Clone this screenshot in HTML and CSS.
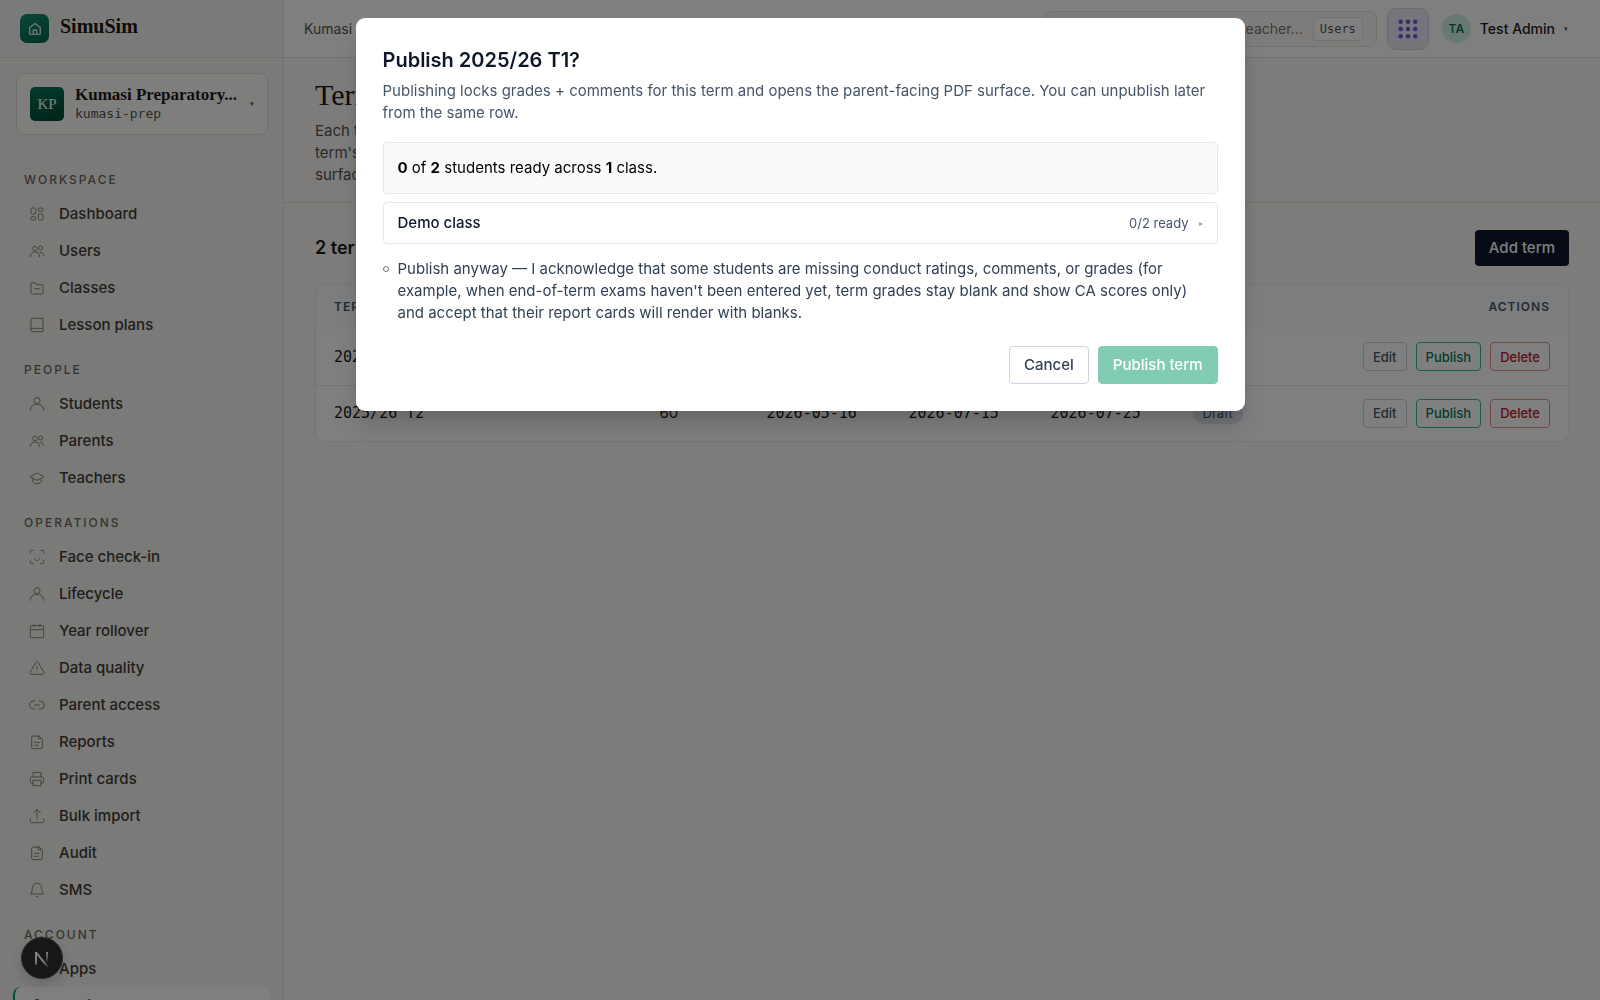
FILE: index.html
```html
<!doctype html>
<html lang="en">
<head>
	<meta charset="utf-8">
	<title>Terms - SimuSim</title>
	<link rel="stylesheet" href="styles.css">
</head>

<body>
	<!-- icons shared by the sidebar -->
	<svg class="sprite" aria-hidden="true">
		<symbol id="grid" viewBox="0 0 24 24"><rect x="3" y="3" width="7" height="9" rx="1.5"/><rect x="14" y="3" width="7" height="5" rx="1.5"/><rect x="14" y="12" width="7" height="9" rx="1.5"/><rect x="3" y="16" width="7" height="5" rx="1.5"/></symbol>
		<symbol id="users" viewBox="0 0 24 24"><circle cx="9" cy="8.5" r="3.5"/><path d="M2 21c0-5 3-7.500 7-7.500s7 2.500 7 7.500"/><circle cx="17.5" cy="7.5" r="3"/><path d="M16 14c3-.5 5.500 1.500 6 5"/></symbol>
		<symbol id="folder" viewBox="0 0 24 24"><path d="M3 6a2 2 0 0 1 2-2h4l2 3h8a2 2 0 0 1 2 2v10a2 2 0 0 1-2 2H5a2 2 0 0 1-2-2z"/><path d="M8 13h8"/></symbol>
		<symbol id="book" viewBox="0 0 24 24"><path d="M3 19.500V4a2 2 0 0 1 2-2h16v20H5.500A2.500 2.500 0 0 1 3 19.500 2.500 2.500 0 0 1 5.500 17H21"/></symbol>
		<symbol id="user" viewBox="0 0 24 24"><circle cx="12" cy="7" r="4.500"/><path d="M2 22c0-6 4-9.500 10-9.500S22 16 22 22"/></symbol>
		<symbol id="cap" viewBox="0 0 24 24"><path d="M1.500 10L12 4.500 22.500 10 12 15.500z"/><path d="M5.500 12.500V17c1.500 2.500 4 3.500 6.500 3.500s5-1 6.500-3.500v-4.500"/></symbol>
		<symbol id="face" viewBox="0 0 24 24"><path d="M2 7V4a2 2 0 0 1 2-2h3M17 2h3a2 2 0 0 1 2 2v3M22 17v3a2 2 0 0 1-2 2h-3M7 22H4a2 2 0 0 1-2-2v-3M8 14c1 2.500 2.500 3.500 4 3.500s3-1 4-3.500M8.500 9v.5M15.500 9v.5"/></symbol>
		<symbol id="calendar" viewBox="0 0 24 24"><rect x="2" y="4" width="20" height="18" rx="2"/><path d="M2 10h20M7.500 1.500V6M16.500 1.500V6"/></symbol>
		<symbol id="alert" viewBox="0 0 24 24"><path d="M10.300 3.500L1.600 18.500A2 2 0 0 0 3.300 21.500h17.400a2 2 0 0 0 1.700-3L13.700 3.500a2 2 0 0 0-3.400 0zM12 8.500v6M12 17.500v.5"/></symbol>
		<symbol id="link" viewBox="0 0 24 24"><path d="M9.500 6H7a6 6 0 0 0 0 12h2.500M14.500 6H17a6 6 0 0 1 0 12h-2.500M8 12h8"/></symbol>
		<symbol id="doc" viewBox="0 0 24 24"><path d="M14 3H6a2 2 0 0 0-2 2v15a2 2 0 0 0 2 2h12a2 2 0 0 0 2-2V8l-6-6v5h6M8 12.500h8M8 17h6"/></symbol>
		<symbol id="printer" viewBox="0 0 24 24"><path d="M6 9V2h12v7M6 18H4a2 2 0 0 1-2-2v-5a2 2 0 0 1 2-2h16a2 2 0 0 1 2 2v5a2 2 0 0 1-2 2h-2"/><rect x="6" y="14" width="12" height="8"/></symbol>
		<symbol id="upload" viewBox="0 0 24 24"><path d="M2 16v4a2 2 0 0 0 2 2h16a2 2 0 0 0 2-2v-4M12 17V2M6.500 7.500L12 2l5.500 5.500"/></symbol>
		<symbol id="bell" viewBox="0 0 24 24"><path d="M5 9a7 7 0 0 1 14 0c0 7 3 9 3 9H2s3-2 3-9M10 22h4"/></symbol>
		<symbol id="cog" viewBox="0 0 24 24"><circle cx="12" cy="12" r="3"/><path d="M10 2h4l.7 3 2 1.100 3-.9 2 3.500-2.300 2.100v2.400l2.300 2.100-2 3.500-3-.9-2 1.100-.7 3h-4l-.7-3-2-1.100-3 .9-2-3.500 2.300-2.100v-2.400L2.300 8.700l2-3.500 3 .9 2-1.100z"/></symbol>
	</svg>

	<div class="app">
		<aside class="sidebar">
			<a class="brand" href="#">
				<span class="brand-mark"><svg viewBox="0 0 24 24"><path d="M3 21V9.500L12 2.500l9 7V21zM9 21v-7h6v7"/></svg></span>
				<span class="brand-name">SimuSim</span>
			</a>
			<button class="school" type="button">
				<span class="school-mark">KP</span>
				<span class="school-text">
					<span class="school-name">Kumasi Preparatory...</span>
					<span class="school-slug">kumasi-prep</span>
				</span>
				<span class="caret">▾</span>
			</button>
			<nav class="nav">
				<h2>Workspace</h2>
				<a href="#"><svg><use href="#grid"/></svg>Dashboard</a>
				<a href="#"><svg><use href="#users"/></svg>Users</a>
				<a href="#"><svg><use href="#folder"/></svg>Classes</a>
				<a href="#"><svg><use href="#book"/></svg>Lesson plans</a>
				<h2>People</h2>
				<a href="#"><svg><use href="#user"/></svg>Students</a>
				<a href="#"><svg><use href="#users"/></svg>Parents</a>
				<a href="#"><svg><use href="#cap"/></svg>Teachers</a>
				<h2>Operations</h2>
				<a href="#"><svg><use href="#face"/></svg>Face check-in</a>
				<a href="#"><svg><use href="#user"/></svg>Lifecycle</a>
				<a href="#"><svg><use href="#calendar"/></svg>Year rollover</a>
				<a href="#"><svg><use href="#alert"/></svg>Data quality</a>
				<a href="#"><svg><use href="#link"/></svg>Parent access</a>
				<a href="#"><svg><use href="#doc"/></svg>Reports</a>
				<a href="#"><svg><use href="#printer"/></svg>Print cards</a>
				<a href="#"><svg><use href="#upload"/></svg>Bulk import</a>
				<a href="#"><svg><use href="#doc"/></svg>Audit</a>
				<a href="#"><svg><use href="#bell"/></svg>SMS</a>
				<h2>Account</h2>
				<a href="#"><svg><use href="#grid"/></svg>Apps</a>
				<a class="active" href="#"><svg><use href="#cog"/></svg>Settings</a>
			</nav>
		</aside>

		<div class="page">
			<header class="topbar">
				<span class="crumb">Kumasi Prep</span>
				<label class="search">
					<input type="text" aria-label="Search" placeholder="Find student or teacher...">
					<kbd>Users</kbd>
				</label>
				<button class="apps" type="button" aria-label="Apps">
					<svg viewBox="0 0 22 22"><circle cx="3" cy="3" r="2.500"/><circle cx="11" cy="3" r="2.500"/><circle cx="19" cy="3" r="2.500"/><circle cx="3" cy="11" r="2.500"/><circle cx="11" cy="11" r="2.500"/><circle cx="19" cy="11" r="2.500"/><circle cx="3" cy="19" r="2.500"/><circle cx="11" cy="19" r="2.500"/><circle cx="19" cy="19" r="2.500"/></svg>
				</button>
				<button class="account" type="button">
					<span class="avatar">TA</span>
					Test Admin
					<span class="caret">▾</span>
				</button>
			</header>

			<div class="page-head">
				<h1>Terms</h1>
				<p>Each term belongs to an academic year. Publishing locks a<br>term's grades and comments and opens the parent-facing<br>surface for report cards.</p>
			</div>

			<main class="content">
				<div class="toolbar">
					<h2>2 terms</h2>
					<button class="btn-dark" type="button">Add term</button>
				</div>
				<div class="card">
					<table>
						<thead>
							<tr><th class="c-term">Term</th><th class="c-days">Days</th><th class="c-date">Starts</th><th class="c-date">Ends</th><th class="c-date">Reopens</th><th>Status</th><th class="c-actions">Actions</th></tr>
						</thead>
						<tbody>
							<tr>
								<td class="mono">2025/26 T1</td><td>60</td><td class="mono">2026-01-08</td><td class="mono">2026-04-02</td><td class="mono">2026-05-05</td><td><span class="pill">Draft</span></td>
								<td><div class="actions"><button class="btn-sm" type="button">Edit</button><button class="btn-sm green" type="button">Publish</button><button class="btn-sm red" type="button">Delete</button></div></td>
							</tr>
							<tr>
								<td class="mono">2025/26 T2</td><td>60</td><td class="mono">2026-05-16</td><td class="mono">2026-07-15</td><td class="mono">2026-07-25</td><td><span class="pill">Draft</span></td>
								<td><div class="actions"><button class="btn-sm" type="button">Edit</button><button class="btn-sm green" type="button">Publish</button><button class="btn-sm red" type="button">Delete</button></div></td>
							</tr>
						</tbody>
					</table>
				</div>
			</main>
		</div>
	</div>

	<button class="dev-badge" type="button" aria-label="Dev tools">
		<svg viewBox="0 0 40 40">
			<defs>
				<linearGradient id="n1" x1="0" y1="0" x2="0" y2="1"><stop offset=".6" stop-color="#fff"/><stop offset="1" stop-color="#fff" stop-opacity="0"/></linearGradient>
				<linearGradient id="n2" x1="0" y1="0" x2="0" y2="1"><stop offset="0" stop-color="#fff"/><stop offset="1" stop-color="#fff" stop-opacity="0"/></linearGradient>
			</defs>
			<path d="M13 27V14h2l12 15-2 1-10-13v10z" fill="url(#n1)"/>
			<path d="M24 14h2v12h-2z" fill="url(#n2)"/>
		</svg>
	</button>

	<div class="backdrop">
		<div class="dialog" role="dialog" aria-modal="true" aria-labelledby="dialog-title">
			<h2 id="dialog-title">Publish 2025/26 T1?</h2>
			<p class="lead">Publishing locks grades + comments for this term and opens the parent-facing PDF surface. You can unpublish later from the same row.</p>
			<div class="summary"><b>0</b> of <b>2</b> students ready across <b>1</b> class.</div>
			<button class="class-row" type="button">
				<span class="class-name">Demo class</span>
				<span class="ready">0/2 ready</span>
				<span class="arrow">▸</span>
			</button>
			<label class="ack">
				<input type="checkbox">
				<span>Publish anyway — I acknowledge that some students are missing conduct ratings, comments, or grades (for example, when end-of-term exams haven't been entered yet, term grades stay blank and show CA scores only) and accept that their report cards will render with blanks.</span>
			</label>
			<div class="dialog-foot">
				<button class="btn-outline" type="button">Cancel</button>
				<button class="btn-green" type="button" disabled>Publish term</button>
			</div>
		</div>
	</div>
</body>
</html>
```
FILE: styles.css
```css
* {
	box-sizing: border-box;
}
body {
	margin: 0;
	background: #faf9f5;
	color: #1c1917;
	font-family: Inter, "Liberation Sans", sans-serif;
	font-size: 15px;
	line-height: 22px;
}
h1, h2, p {
	margin: 0;
}
a {
	color: inherit;
	text-decoration: none;
}
button, input {
	font: inherit;
	color: inherit;
}
button {
	padding: 0;
	border: 0;
	background: none;
}
.sprite {
	display: none;
}
.app {
	display: flex;
	height: 100vh;
	overflow: hidden;
}

/* sidebar */
.sidebar {
	flex: 0 0 284px;
	overflow: hidden;
	background: #f5f4f0;
	border-right: 1px solid #e4e2da;
}
.brand {
	display: flex;
	align-items: center;
	gap: 11px;
	height: 58px;
	padding: 0 20px;
	border-bottom: 1px solid #e4e2da;
}
.brand-mark {
	display: grid;
	place-items: center;
	width: 29px;
	height: 29px;
	border-radius: 7px;
	background: linear-gradient(160deg, #10906e, #05674e);
}
.brand-mark svg {
	width: 14px;
	height: 14px;
	fill: none;
	stroke: #fff;
	stroke-width: 2;
}
.brand-name, .school-name, .school-mark, h1 {
	font-family: "Liberation Serif", serif;
}
.brand-name {
	padding-bottom: 6px;
	font-size: 20px;
	font-weight: bold;
}
.school {
	display: flex;
	align-items: center;
	gap: 11px;
	width: 252px;
	height: 62px;
	margin: 15px 16px 0;
	padding: 0 13px;
	border: 1px solid #e4e2da;
	border-radius: 8px;
	background: #fcfcfb;
	text-align: left;
}
.school-mark {
	display: grid;
	flex: none;
	place-items: center;
	width: 34px;
	height: 34px;
	border-radius: 5px;
	background: linear-gradient(160deg, #057a5a, #044433);
	color: #fff;
	font-size: 15px;
}
.school-text {
	flex: 1;
	min-width: 0;
}
.school-name {
	display: block;
	font-size: 17px;
	font-weight: bold;
	line-height: 20px;
	white-space: nowrap;
}
.school-slug {
	display: block;
	color: #57534e;
	font-family: "DejaVu Sans Mono", monospace;
	font-size: 13px;
	line-height: 18px;
}
.caret {
	color: #57534e;
	font-size: 7px;
}
.nav {
	display: flex;
	flex-direction: column;
	padding: 30px 13px 0;
}
.nav h2 {
	flex: none;
	height: 18px;
	margin: 6px 0 6px;
	padding-left: 11px;
	color: #6b6862;
	font-size: 12px;
	font-weight: 500;
	letter-spacing: 2px;
	line-height: 18px;
	text-transform: uppercase;
}
.nav a + h2 {
	margin-top: 18px;
}
.nav a {
	display: flex;
	align-items: center;
	gap: 14px;
	height: 37px;
	padding-left: 16px;
	color: #3f3d38;
	font-weight: 500;
}
.nav svg {
	width: 16px;
	height: 16px;
	fill: none;
	stroke: #8a867c;
	stroke-width: 1.5;
}
.nav .active {
	padding-left: 14px;
	border-left: 2px solid #059669;
	border-radius: 8px;
	background: #fff;
}
.nav .active svg {
	stroke: #047857;
}

/* top bar */
.page {
	flex: 1;
	min-width: 0;
}
.topbar {
	display: flex;
	align-items: center;
	height: 58px;
	padding: 0 32px 0 20px;
	border-bottom: 1px solid #e4e2da;
	background: #fff;
	font-size: 14px;
}
.crumb {
	flex: 1;
	color: #57534e;
}
.search {
	display: flex;
	align-items: center;
	gap: 10px;
	width: 332px;
	height: 36px;
	padding: 0 13px;
	border: 1px solid #e4e2da;
	border-radius: 8px;
	background: #faf9f5;
}
.search input {
	flex: 1;
	min-width: 0;
	padding: 0;
	border: 0;
	background: none;
	text-align: right;
}
.search input::placeholder {
	color: #78756d;
}
kbd {
	padding: 0 6px;
	border: 1px solid #e4e2da;
	border-radius: 4px;
	background: #fff;
	color: #57534e;
	font-family: "DejaVu Sans Mono", monospace;
	font-size: 12px;
}
.apps {
	display: grid;
	place-items: center;
	width: 42px;
	height: 42px;
	margin: 0 13px 0 10px;
	border: 1px solid #d3d6e4;
	border-radius: 9px;
	background: #ebedf7;
}
.apps svg {
	width: 20px;
	height: 20px;
	fill: #6d5be0;
}
.account {
	display: flex;
	align-items: center;
	gap: 9px;
	font-weight: 500;
}
.avatar {
	display: grid;
	place-items: center;
	width: 29px;
	height: 29px;
	border-radius: 50%;
	background: #d1f0e4;
	color: #047857;
	font-size: 12px;
	font-weight: 600;
}

/* page */
.page-head {
	height: 145px;
	padding: 20px 31px 0;
	border-bottom: 1px solid #e4e2da;
}
h1 {
	font-size: 30px;
	font-weight: normal;
	line-height: 34px;
}
.page-head p {
	margin-top: 8px;
	color: #57534e;
}
.content {
	padding: 27px 31px 0;
}
.toolbar {
	display: flex;
	align-items: center;
	justify-content: space-between;
	margin-bottom: 17px;
}
.toolbar h2 {
	font-size: 18px;
	font-weight: 600;
}
.btn-dark {
	height: 36px;
	padding: 0 14px;
	border-radius: 4px;
	background: #0f172a;
	color: #fff;
	font-weight: 500;
}
.card {
	overflow: hidden;
	border: 1px solid #e8ebef;
	border-radius: 9px;
	background: #fff;
}
table {
	width: 100%;
	border-collapse: collapse;
	table-layout: fixed;
}
th, td {
	padding: 0 18px;
	text-align: left;
}
th {
	height: 45px;
	background: #f8fafc;
	color: #475569;
	font-size: 12px;
	font-weight: 600;
	letter-spacing: 1px;
	text-transform: uppercase;
}
td {
	height: 56px;
}
tbody tr + tr td {
	border-top: 1px solid #e2e8f0;
}
.c-term {
	width: 26%;
}
.c-days {
	width: 107px;
}
.c-date {
	width: 142px;
}
.c-actions {
	width: 24%;
	text-align: right;
}
.mono {
	font-family: "DejaVu Sans Mono", monospace;
	white-space: nowrap;
}
.pill {
	padding: 3px 10px;
	border-radius: 12px;
	background: #e2e8f0;
	color: #475569;
	font-size: 13px;
}
.actions {
	display: flex;
	justify-content: flex-end;
	gap: 9px;
}
.btn-sm {
	height: 29px;
	padding: 0 9px;
	border: 1px solid #cbd5e1;
	border-radius: 4px;
	color: #475569;
	font-size: 13px;
	font-weight: 500;
}
.green {
	border-color: #34b98a;
	color: #047857;
}
.red {
	border-color: #f08a8a;
	color: #b91c1c;
}

/* floating badge in the corner */
.dev-badge {
	position: fixed;
	bottom: 21px;
	left: 21px;
	width: 42px;
	height: 42px;
	border: 1px solid #555;
	border-radius: 50%;
	background: #2e2e2e;
	box-shadow: 0 4px 12px rgba(0, 0, 0, .15);
}
.dev-badge svg {
	display: block;
	width: 40px;
	height: 40px;
}

/* dialog */
.backdrop {
	position: fixed;
	inset: 0;
	padding: 18px;
	background: rgba(0, 0, 0, .5);
}
.dialog {
	max-width: 889px;
	margin: 0 auto;
	padding: 27px;
	border-radius: 9px;
	background: #fff;
	box-shadow: 0 20px 25px rgba(0, 0, 0, .1), 0 8px 10px rgba(0, 0, 0, .1);
}
.dialog h2 {
	color: #0f172a;
	font-size: 20px;
	font-weight: 600;
	line-height: 30px;
}
.lead {
	margin: 5px 0 18px;
	color: #475569;
}
.summary {
	padding: 14px;
	border: 1px solid #e2e8f0;
	border-radius: 4px;
	background: #f8fafc;
	color: #000;
}
.class-row {
	display: flex;
	align-items: center;
	gap: 10px;
	width: 100%;
	height: 42px;
	margin: 8px 0 14px;
	padding: 0 14px;
	border: 1px solid #e2e8f0;
	border-radius: 4px;
	text-align: left;
}
.class-name {
	flex: 1;
	color: #0f172a;
	font-weight: 500;
}
.ready {
	color: #475569;
	font-size: 13px;
}
.arrow {
	color: #94a3b8;
	font-size: 8px;
}
.ack {
	display: flex;
	gap: 9px;
	color: #334155;
}
.ack input {
	appearance: none;
	flex: none;
	width: 6px;
	height: 6px;
	margin: 8px 0 0;
	border: 1px solid #767676;
	border-radius: 50%;
}
.dialog-foot {
	display: flex;
	justify-content: flex-end;
	gap: 9px;
	margin-top: 22px;
}
.btn-outline, .btn-green {
	height: 38px;
	padding: 0 14px;
	border: 1px solid #cbd5e1;
	border-radius: 4px;
	color: #334155;
	font-weight: 500;
}
.btn-green {
	border-color: #82cbb4;
	background: #82cbb4;
	color: #fff;
}
```
